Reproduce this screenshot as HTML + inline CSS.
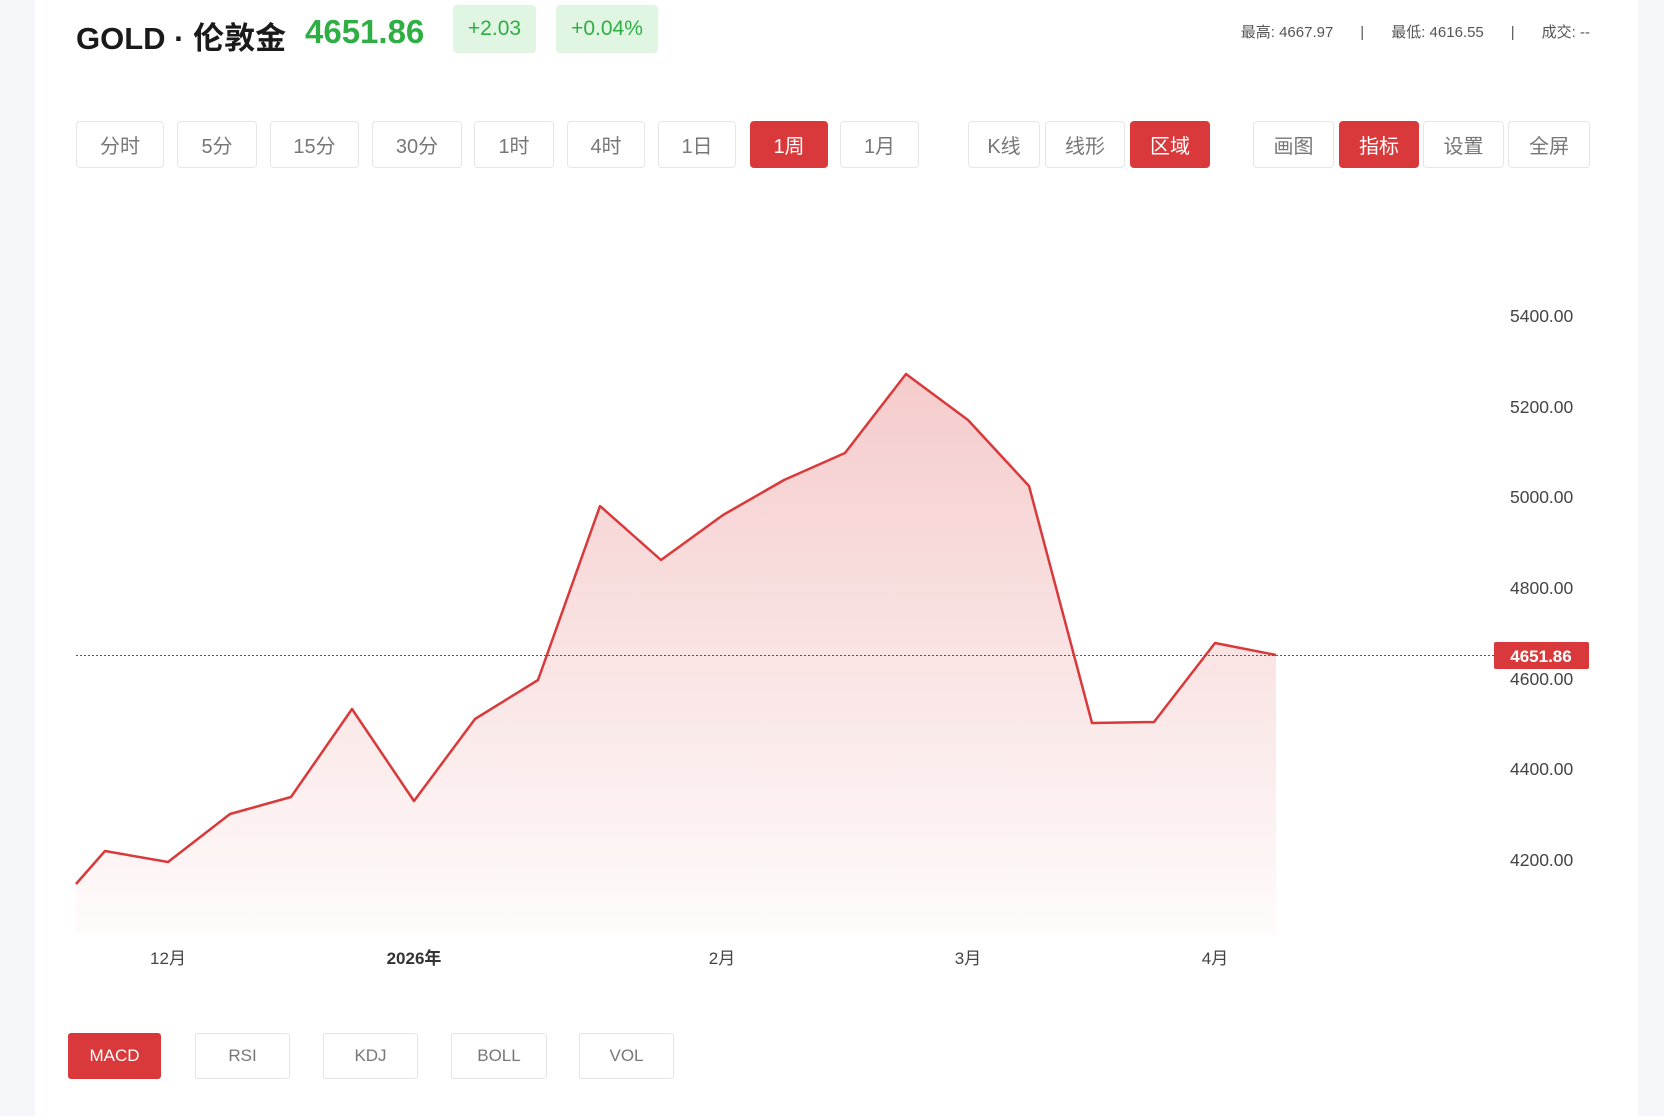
<!DOCTYPE html>
<html><head><meta charset="utf-8"><style>
*{margin:0;padding:0;box-sizing:border-box}
body{width:1664px;height:1116px;background:#f5f7fb;font-family:"Liberation Sans","Noto Sans CJK SC",sans-serif;position:relative;overflow:hidden}
.panel{position:absolute;left:35px;top:0;width:1603px;height:1116px;background:#fff}
.a{position:absolute;white-space:nowrap}
.btn{position:absolute;top:121px;height:47px;border:1px solid #e6e6e6;border-radius:4px;background:#fff;color:#777;font-size:20px;display:flex;align-items:center;justify-content:center}
.bb{position:absolute;top:1033px;height:46px;border:1px solid #e3e3e3;border-radius:3px;background:#fff;color:#777;font-size:17px;display:flex;align-items:center;justify-content:center}
.red{background:#d9393a;color:#fff;border-color:#d9393a}
.badge{position:absolute;top:5px;height:48px;background:#e1f5e3;color:#2fae44;border-radius:4px;font-size:21px;display:flex;align-items:center;justify-content:center}
.st span{display:inline-block;margin:0 27px}
</style></head><body>
<div class="panel"></div>
<div class="a" style="left:76px;top:13px;font-size:31px;font-weight:bold;color:#1a1a1a">GOLD · 伦敦金</div>
<div class="a" style="left:305px;top:13px;font-size:33px;font-weight:bold;color:#2fae44">4651.86</div>
<div class="badge" style="left:453px;width:83px">+2.03</div>
<div class="badge" style="left:556px;width:102px">+0.04%</div>
<div class="a st" style="right:74px;top:21px;font-size:15px;color:#555">最高: 4667.97<span>|</span>最低: 4616.55<span>|</span>成交: --</div>

<div class="btn" style="left:76px;width:88px">分时</div>
<div class="btn" style="left:177px;width:80px">5分</div>
<div class="btn" style="left:270px;width:89px">15分</div>
<div class="btn" style="left:372px;width:90px">30分</div>
<div class="btn" style="left:474px;width:80px">1时</div>
<div class="btn" style="left:567px;width:78px">4时</div>
<div class="btn" style="left:658px;width:78px">1日</div>
<div class="btn red" style="left:750px;width:78px">1周</div>
<div class="btn" style="left:840px;width:79px">1月</div>
<div class="btn" style="left:968px;width:72px">K线</div>
<div class="btn" style="left:1045px;width:80px">线形</div>
<div class="btn red" style="left:1130px;width:80px">区域</div>
<div class="btn" style="left:1253px;width:81px">画图</div>
<div class="btn red" style="left:1339px;width:80px">指标</div>
<div class="btn" style="left:1423px;width:81px">设置</div>
<div class="btn" style="left:1508px;width:82px">全屏</div>

<svg class="a" style="left:0;top:0" width="1664" height="1116">
<defs><linearGradient id="g" x1="0" y1="0" x2="0" y2="1"><stop offset="0" stop-color="#d9393a" stop-opacity="0.26"/><stop offset="1" stop-color="#d9393a" stop-opacity="0.02"/></linearGradient></defs>
<path d="M76,884 L105,851 L168,862 L230,814 L291,797 L352,709 L414,801 L475,719 L538,680 L600,506 L661,560 L723,515 L784,480 L845,453 L906,374 L968,420 L1029,486 L1092,723 L1154,722 L1215,643 L1276,655 L1276,934 L76,934 Z" fill="url(#g)"/>
<path d="M76,884 L105,851 L168,862 L230,814 L291,797 L352,709 L414,801 L475,719 L538,680 L600,506 L661,560 L723,515 L784,480 L845,453 L906,374 L968,420 L1029,486 L1092,723 L1154,722 L1215,643 L1276,655" fill="none" stroke="#d9393a" stroke-width="2.5" stroke-linejoin="round"/>
<line x1="76" y1="655.5" x2="1494" y2="655.5" stroke="#b03030" stroke-width="1" stroke-dasharray="2,2"/>
<g font-family="Liberation Sans, sans-serif" font-size="17.5" fill="#444">
<text x="1510" y="322">5400.00</text><text x="1510" y="413">5200.00</text><text x="1510" y="503">5000.00</text><text x="1510" y="594">4800.00</text><text x="1510" y="685">4600.00</text><text x="1510" y="775">4400.00</text><text x="1510" y="866">4200.00</text>
</g>
<rect x="1494" y="642" width="95" height="27" rx="2" fill="#d9393a"/>
<text x="1541" y="662" text-anchor="middle" font-family="Liberation Sans, sans-serif" font-size="17" font-weight="bold" fill="#fff">4651.86</text>
<g font-family="Liberation Sans, Noto Sans CJK SC, sans-serif" font-size="17" fill="#444" text-anchor="middle">
<text x="168" y="964">12月</text><text x="414" y="964" font-weight="bold" fill="#333">2026年</text><text x="722" y="964">2月</text><text x="968" y="964">3月</text><text x="1215" y="964">4月</text>
</g>
</svg>

<div class="bb red" style="left:68px;width:93px">MACD</div>
<div class="bb" style="left:195px;width:95px">RSI</div>
<div class="bb" style="left:323px;width:95px">KDJ</div>
<div class="bb" style="left:451px;width:96px">BOLL</div>
<div class="bb" style="left:579px;width:95px">VOL</div>
</body></html>
